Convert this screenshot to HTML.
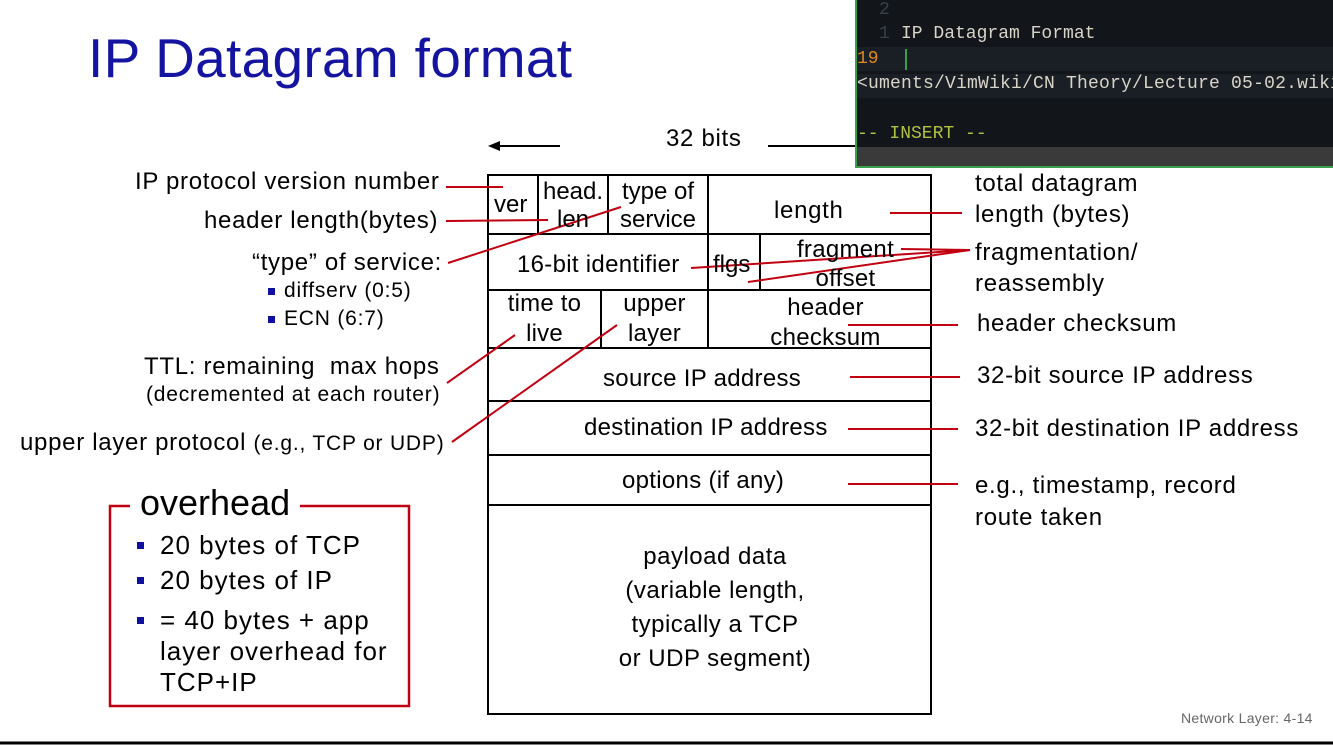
<!DOCTYPE html>
<html><head><meta charset="utf-8"><style>
body{margin:0;width:1333px;height:745px;overflow:hidden;background:#fff;position:relative;font-family:"Liberation Sans",Arial,sans-serif;color:#000}
.a{position:absolute;white-space:nowrap}
.t{font-size:24px;line-height:28px;letter-spacing:.7px}
.s{font-size:21px;letter-spacing:.8px}
.o{font-size:26px;letter-spacing:1px}
.c{text-align:center}
.term{position:absolute;left:855px;top:0;width:478px;height:166px;background:#12161b;border-left:2px solid #3aa04a;border-bottom:2px solid #3aa04a;font-family:"Liberation Mono","DejaVu Sans Mono",monospace;font-size:18px;color:#d8d4c8}
.term .a{line-height:24px}
.sq{position:absolute;width:7px;height:7px;background:#1010a0}
</style></head><body>
<div class="a" style="left:88px;top:25px;font-size:55px;color:#1414a0;line-height:66px;letter-spacing:.3px">IP Datagram format</div>

<svg class="a" style="left:0;top:0" width="1333" height="745">
<g stroke="#000" stroke-width="2" fill="none">
<rect x="488" y="175" width="443" height="539"/>
<line x1="488" y1="234" x2="931" y2="234"/>
<line x1="488" y1="290" x2="931" y2="290"/>
<line x1="488" y1="348" x2="931" y2="348"/>
<line x1="488" y1="401" x2="931" y2="401"/>
<line x1="488" y1="455" x2="931" y2="455"/>
<line x1="488" y1="505" x2="931" y2="505"/>
<line x1="538" y1="175" x2="538" y2="234"/>
<line x1="608" y1="175" x2="608" y2="234"/>
<line x1="708" y1="175" x2="708" y2="348"/>
<line x1="760" y1="234" x2="760" y2="290"/>
<line x1="601" y1="290" x2="601" y2="348"/>
<line x1="498" y1="146" x2="560" y2="146"/>
<line x1="768" y1="146" x2="855" y2="146"/>
</g>
<polygon points="488,146 500,141 500,151" fill="#000"/>
<g stroke="#c00010" stroke-width="2" fill="none">
<line x1="446" y1="187" x2="503" y2="187"/>
<line x1="446" y1="221" x2="548" y2="220"/>
<line x1="448" y1="263" x2="621" y2="207"/>
<line x1="691" y1="268" x2="970" y2="250"/>
<line x1="748" y1="282" x2="970" y2="250"/>
<line x1="901" y1="249" x2="970" y2="250"/>
<line x1="890" y1="213" x2="962" y2="213"/>
<line x1="848" y1="325" x2="958" y2="325"/>
<line x1="447" y1="383" x2="515" y2="335"/>
<line x1="452" y1="442" x2="617" y2="325"/>
<line x1="850" y1="377" x2="960" y2="377"/>
<line x1="848" y1="429" x2="958" y2="429"/>
<line x1="848" y1="484" x2="958" y2="484"/>
</g>
<rect x="110" y="506" width="299" height="200" fill="none" stroke="#c00010" stroke-width="2.5"/>
<line x1="0" y1="743" x2="1333" y2="743" stroke="#000" stroke-width="3"/>
</svg>

<div class="a t" style="left:666px;top:125px">32 bits</div>
<div class="a t" style="left:494px;top:191px;letter-spacing:0">ver</div>
<div class="a t c" style="left:538px;top:178px;width:70px;letter-spacing:0">head.<br>len</div>
<div class="a t c" style="left:608px;top:178px;width:100px;letter-spacing:0">type of<br>service</div>
<div class="a t" style="left:774px;top:197px">length</div>
<div class="a t" style="left:517px;top:251px;letter-spacing:.3px">16-bit identifier</div>
<div class="a t" style="left:713px;top:251px;letter-spacing:0">flgs</div>
<div class="a t c" style="left:760px;top:235px;width:171px;letter-spacing:.3px;line-height:29px">fragment<br>offset</div>
<div class="a t c" style="left:488px;top:289px;width:113px;line-height:30px;letter-spacing:.2px">time to<br>live</div>
<div class="a t c" style="left:601px;top:289px;width:107px;line-height:30px;letter-spacing:.2px">upper<br>layer</div>
<div class="a t c" style="left:740px;top:293px;width:171px;line-height:30px;letter-spacing:.3px">header<br>checksum</div>
<div class="a t" style="left:603px;top:365px;letter-spacing:.3px">source IP address</div>
<div class="a t" style="left:584px;top:414px;letter-spacing:.3px">destination IP address</div>
<div class="a t" style="left:622px;top:467px;letter-spacing:.3px">options (if any)</div>
<div class="a t c" style="left:580px;top:540px;width:270px;line-height:34px;letter-spacing:.5px">payload data<br>(variable length,<br>typically a TCP<br>or UDP segment)</div>

<div class="a t" style="left:135px;top:168px">IP protocol version number</div>
<div class="a t" style="left:204px;top:207px">header length(bytes)</div>
<div class="a t" style="left:252px;top:249px">“type” of service:</div>
<div class="sq" style="left:268px;top:288px"></div><div class="a s" style="left:284px;top:279px">diffserv (0:5)</div>
<div class="sq" style="left:268px;top:316px"></div><div class="a s" style="left:284px;top:307px">ECN (6:7)</div>
<div class="a t" style="left:144px;top:353px">TTL: remaining&nbsp; max hops</div>
<div class="a s" style="left:146px;top:383px">(decremented at each router)</div>
<div class="a t" style="left:20px;top:429px">upper layer protocol <span class="s">(e.g., TCP or UDP)</span></div>

<div class="a t" style="left:975px;top:168px;line-height:31px">total datagram<br>length (bytes)</div>
<div class="a t" style="left:975px;top:237px;line-height:31px">fragmentation/<br>reassembly</div>
<div class="a t" style="left:977px;top:310px">header checksum</div>
<div class="a t" style="left:977px;top:362px">32-bit source IP address</div>
<div class="a t" style="left:975px;top:415px">32-bit destination IP address</div>
<div class="a t" style="left:975px;top:470px;line-height:32px">e.g., timestamp, record<br>route taken</div>

<div class="a" style="left:130px;top:482px;font-size:36px;line-height:42px;background:#fff;padding:0 10px">overhead</div>
<div class="sq" style="left:137px;top:542px"></div><div class="a o" style="left:160px;top:530px">20 bytes of TCP</div>
<div class="sq" style="left:137px;top:577px"></div><div class="a o" style="left:160px;top:565px">20 bytes of IP</div>
<div class="sq" style="left:137px;top:617px"></div><div class="a o" style="left:160px;top:605px;line-height:31px">= 40 bytes + app<br>layer overhead for<br>TCP+IP</div>

<div class="a" style="left:1181px;top:710px;font-size:14px;color:#666;letter-spacing:.3px">Network Layer: 4-14</div>

<div class="term">
<div class="a" style="left:22px;top:-2px;color:#3a4048">2</div>
<div class="a" style="left:22px;top:22px;color:#3a4048">1</div>
<div class="a" style="left:44px;top:22px">IP Datagram Format</div>
<div class="a" style="left:0;top:47px;width:478px;height:24px;background:#1a1f25"></div>
<div class="a" style="left:0;top:47px;color:#e08a1e">19</div>
<div class="a" style="left:48px;top:49px;width:2px;height:21px;background:#3aa04a"></div>
<div class="a" style="left:0;top:74px;width:478px;height:24px;background:#1a1f25"></div>
<div class="a" style="left:0;top:72px;letter-spacing:.2px">&lt;uments/VimWiki/CN Theory/Lecture 05-02.wiki</div>
<div class="a" style="left:0;top:122px;color:#b0c040">-- INSERT --</div>
<div class="a" style="left:0;top:147px;width:478px;height:19px;background:#3a3a3a"></div>
</div>
</body></html>
